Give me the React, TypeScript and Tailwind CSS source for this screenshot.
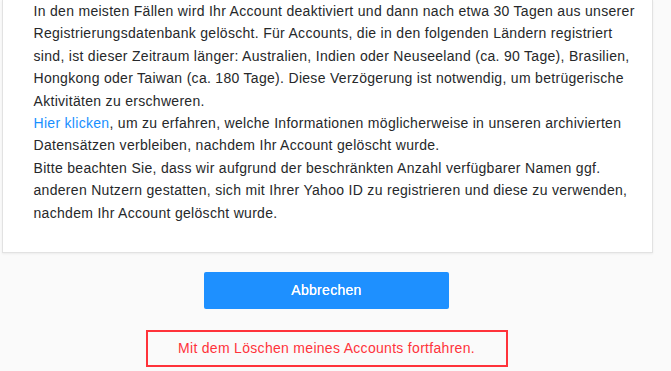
const lines = [
  'In den meisten Fällen wird Ihr Account deaktiviert und dann nach etwa 30 Tagen aus unserer',
  'Registrierungsdatenbank gelöscht. Für Accounts, die in den folgenden Ländern registriert',
  'sind, ist dieser Zeitraum länger: Australien, Indien oder Neuseeland (ca. 90 Tage), Brasilien,',
  'Hongkong oder Taiwan (ca. 180 Tage). Diese Verzögerung ist notwendig, um betrügerische',
  'Aktivitäten zu erschweren.',
];

const lines2 = [
  'Datensätzen verbleiben, nachdem Ihr Account gelöscht wurde.',
  'Bitte beachten Sie, dass wir aufgrund der beschränkten Anzahl verfügbarer Namen ggf.',
  'anderen Nutzern gestatten, sich mit Ihrer Yahoo ID zu registrieren und diese zu verwenden,',
  'nachdem Ihr Account gelöscht wurde.',
];

export default function App() {
  return (
    <div className="min-h-[371px] w-[671px] bg-[#fafafa] font-['Liberation_Sans',Arial,sans-serif] text-[14px] tracking-[0.3px] overflow-hidden">
      <div className="w-[653px] flex flex-col items-center">
        {/* Info card */}
        <div className="ml-px w-[651px] bg-white border-x border-b border-[#e2e2e2] shadow-[0_1px_2px_rgba(0,0,0,0.06)] pl-[31px] pr-[20px] pb-[28px] text-[#26282a] leading-[22.4px] whitespace-nowrap">
          {lines.map((l) => (
            <div key={l}>{l}</div>
          ))}
          <div>
            <a href="#" className="text-[#188fff]">Hier klicken</a>, um zu erfahren, welche Informationen möglicherweise in unseren archivierten
          </div>
          {lines2.map((l) => (
            <div key={l}>{l}</div>
          ))}
        </div>

        <button className="mt-[19px] w-[245px] h-[37px] rounded-[2px] bg-[#1e90ff] text-white font-medium [text-shadow:0_0_0.4px_#fff]">
          Abbrechen
        </button>

        <button className="mt-[21px] w-[362px] h-[37px] border-2 border-[#ff333a] text-[#ff333a]">
          Mit dem Löschen meines Accounts fortfahren.
        </button>
      </div>
    </div>
  );
}
